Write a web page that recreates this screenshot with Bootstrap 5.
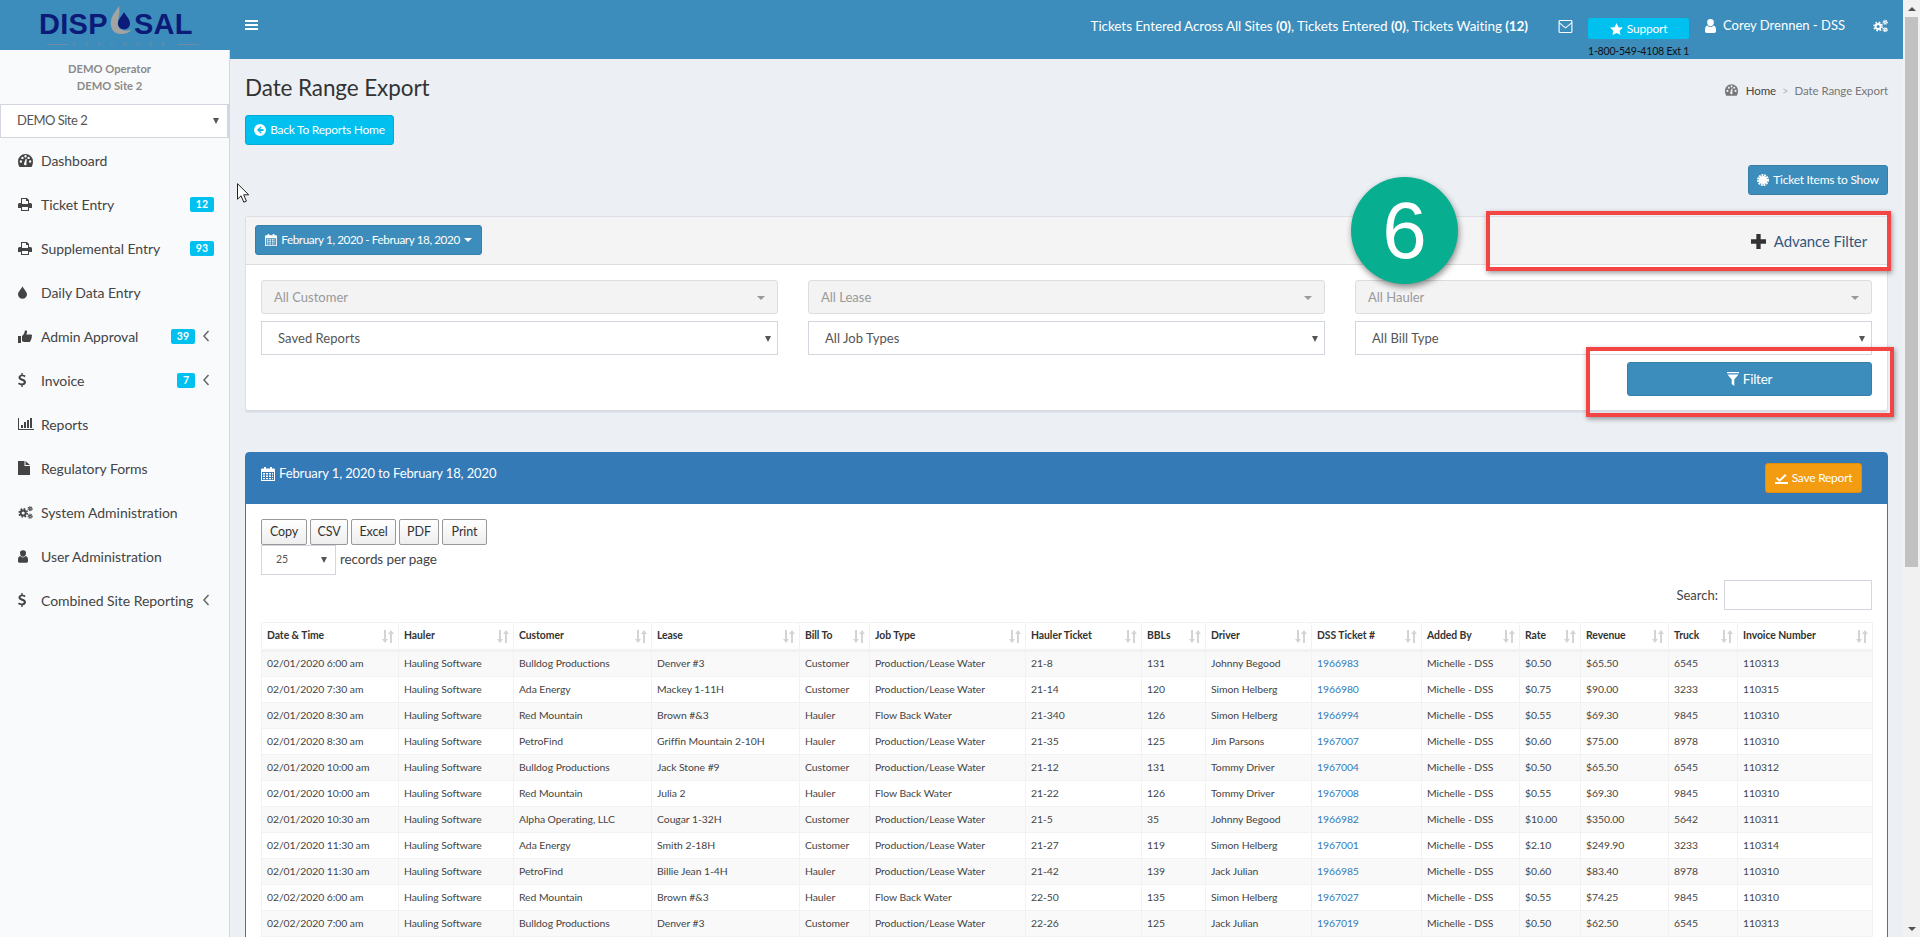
<!DOCTYPE html>
<html lang="en">
<head>
<meta charset="utf-8">
<title>Date Range Export</title>
<link rel="stylesheet" href="https://cdn.jsdelivr.net/npm/bootstrap@5.3.0/dist/css/bootstrap.min.css">
<style>
html,body{height:100%;overflow:hidden}
body{background:#ecf0f5;font-family:"Lato","Open Sans",sans-serif;color:#333;font-size:13px}
.ico{fill:currentColor;flex:none;display:inline-block}
.app-root{height:937px}
.left-col{width:230px;flex:none}
.brand-box{height:50px;background:#3c8dbc;overflow:hidden}
.brand-word{font-family:"Liberation Sans",sans-serif;font-weight:700;font-size:29px;line-height:29px;color:#0c1a78;letter-spacing:.3px}
.brand-row{height:29px;padding:10px 0 0 39px;box-sizing:content-box}
.brand-drop{width:26px;height:34px;margin:-5px 0 0 0;flex:none}
.brand-sub{font-family:"Liberation Sans",sans-serif;font-size:5px;line-height:6px;letter-spacing:9.2px;color:#6f8ea6;white-space:nowrap;margin-top:2px;padding-left:47px;gap:4px}
.brand-line{display:block;width:21px;height:1px;background:#6f8ea6;flex:none}
.side{flex:1;background:#f9fafc;border-right:1px solid #d2d6de;width:230px}
.side-org{height:54px;padding-top:10px;text-align:center;font-weight:700;font-size:11.2px;line-height:17px;color:#8a8a8a;padding-right:10px}
.site-pick{height:34px;width:229px;background:#fff;border:1px solid #d2d6de;border-width:1px 2px 1px 1px;padding:0 8px 0 16px;font-size:13px;color:#555;letter-spacing:-.5px}
.tri-dark{display:block;width:0;height:0;border-left:3.5px solid transparent;border-right:3.5px solid transparent;border-top:6px solid #555;flex:none}
.menu-list{list-style:none;margin:0;padding:0}
.menu-row{height:44px;padding:0 15px 0 18px;color:#444;font-size:14px;margin:0}
.menu-ic{width:23px;flex:none;display:flex;align-items:center}
.menu-txt{flex:1;white-space:nowrap;letter-spacing:-.05px}
.pill-cyan{background:#00c0ef;color:#fff;font-weight:700;font-size:10.5px;line-height:15px;height:15px;border-radius:2px;padding:0 6px}
.chev{width:8px;margin:0 4px 0 7px;color:#666;flex:none}
.main-col{flex:1;min-width:0;position:relative;overflow:hidden}
.top-bar{height:59px;background:#3c8dbc;color:#fff;position:relative}
.burger{position:absolute;left:15px;top:20px;width:13px}
.burger span{display:block;height:2px;background:#fff;margin-bottom:2px}
.top-stats{font-size:13.5px;letter-spacing:-.07px;white-space:nowrap;margin-right:30px;margin-top:-7px}
.top-right{padding-right:15px;height:59px}
.support-wrap{width:101px;margin:0 16px 0 15px;padding-top:18px;align-self:flex-start}
.support-btn{background:#00c0ef;height:21px;border-radius:2px;color:#fff;font-size:12px;line-height:21px;text-align:center;letter-spacing:-.2px}
.support-phone{color:#111;font-size:10.5px;line-height:12px;margin-top:6px;white-space:nowrap;letter-spacing:-.2px}
.user-nm{font-size:13px;margin:0 28px 0 7px;white-space:nowrap}
.top-item{margin-top:-7px}
.page-wrap{padding:0 15px;height:878px;overflow:hidden}
.page-h{padding-top:15px;height:56px}
.page-title{font-size:22.5px;font-weight:400;color:#333;margin:0;line-height:27px;letter-spacing:-.1px}
.crumbs{font-size:11.5px;color:#777;margin-top:8px;letter-spacing:-.1px}
.crumbs b{font-weight:400;color:#444}
.crumbs i{font-style:normal;color:#bbb;margin:0 6px}
.btn-sky{background:#00c0ef;border:1px solid #00acd6;color:#fff;height:30px;width:149px;font-size:12px;border-radius:3px;padding:0;letter-spacing:-.25px}
.btn-blue{background:#3c8dbc;border:1px solid #367fa9;color:#fff;font-size:12px;border-radius:3px;padding:0;letter-spacing:-.25px}
.btn-ticket{height:30px;width:140px}
.ticket-row{margin-top:20px;height:51px}
.filter-box{background:#fff;border:1px solid #dcdfe5;border-bottom:2px solid #d9dde3;border-radius:3px;height:196px;position:relative;box-shadow:0 1px 1px rgba(0,0,0,.05)}
.filter-head{height:48px;background:#f4f4f4;border-bottom:1px solid #ddd;padding:8px 9px 0}
.btn-date{height:30px;width:227px;font-size:11.7px;letter-spacing:-.4px}
.adv-link{font-size:15px;color:#34587f;margin:5px 11px 0 0;letter-spacing:-.12px}
.filter-body{padding:15px 15px 0}
.filter-grid{display:grid;grid-template-columns:517px 517px 517px;column-gap:30px;row-gap:7px}
.pick-off{height:34px;background:#f3f3f3;border:1px solid #ddd;border-radius:3px;padding:1px 12px 0;color:#999;font-size:13px}
.pick-on{height:34px;background:#fff;border:1px solid #d2d6de;padding:1px 6px 0 16px;color:#555;font-size:13px;letter-spacing:.05px}
.caret-grey{width:0;height:0;border-left:4px solid transparent;border-right:4px solid transparent;border-top:4px solid #999}
.filter-action{justify-content:flex-end;margin-top:7px}
.btn-filter{width:245px;height:34px;font-size:13.5px}
.report-box{background:#fff;border:1px solid #337ab7;border-top-left-radius:4px;border-top-right-radius:4px;margin-top:40px;height:520px}
.report-head{background:#337ab7;height:51px;color:#fff;padding:0 25px 0 15px}
.report-title{font-size:13px;padding-top:11px;letter-spacing:-.12px}
.btn-save{background:#f39c12;border:1px solid #e08e0b;color:#fff;font-size:12px;width:97px;height:30px;border-radius:3px;padding:0;margin-top:10px;letter-spacing:-.25px}
.report-body{padding:15px 15px 0}
.tool-row{gap:3px;height:26px}
.btn-export{height:26px;background:linear-gradient(#fff,#eee);border:1px solid #999;color:#333;font-size:12.5px;padding:1px 0 0;border-radius:2px;letter-spacing:-.1px}
.len-row{height:35px}
.len-pick{width:75px;height:30px;border:1px solid #d2d6de;padding:0 8px 0 14px;font-size:10.5px;color:#555}
.len-txt{font-size:13.500px;margin-left:4px;line-height:28px;color:#444;letter-spacing:-.1px}
.search-row{justify-content:flex-end;height:42px;gap:6px;color:#444;font-size:13px;line-height:30px}
.search-box{width:148px;height:30px;border:1px solid #d2d6de;background:#fff}
.data-tbl{table-layout:fixed;width:1611px;border-collapse:collapse;font-size:10.4px;color:#444;letter-spacing:-.05px}
.data-tbl th{height:28px;border:1px solid #f2f2f2;border-bottom:3px solid #f2f2f2;padding:0 0 0 5px;font-weight:700;color:#333;white-space:nowrap;position:relative;font-size:10.4px}
.data-tbl td{height:26px;border:1px solid #f2f2f2;padding:0 0 0 5px;white-space:nowrap;overflow:hidden}
.data-tbl tbody tr:nth-child(odd){background:#f9f9f9}
.data-tbl a{color:#337ab7;text-decoration:none}
.sort-ic{position:absolute;right:4px;top:7px;color:#d4d4d4}
.scroll-rail{width:17px;flex:none;background:#f1f1f1;display:flex;flex-direction:column}
.scroll-btn{height:17px;display:flex;align-items:center;justify-content:center}
.scroll-thumb{height:550px;background:#c1c1c1;margin:0 2px}
.scroll-gap{flex:1}
.tri-up{width:0;height:0;border-left:4px solid transparent;border-right:4px solid transparent;border-bottom:4px solid #505050}
.tri-dn{width:0;height:0;border-left:4px solid transparent;border-right:4px solid transparent;border-top:4px solid #505050}
.note-oval{position:absolute;left:1121px;top:177px;width:107px;height:107px;border-radius:50%;background:#07ae8f;box-shadow:1px 3px 6px rgba(0,0,0,.45);color:#fff;font-family:"Liberation Sans",sans-serif;font-size:80px;line-height:107px;text-align:center;z-index:5}
.note-rect{position:absolute;border:4px solid #f44545;box-shadow:1px 2px 5px rgba(0,0,0,.4);z-index:6}
.rect-a{left:1256px;top:211px;width:405px;height:60px}
.rect-b{left:1356px;top:347px;width:308px;height:70px}
.mouse-ptr{position:absolute;left:7px;top:183px;z-index:7}
</style>
</head>
<body>
<svg width="0" height="0" style="position:absolute">
<defs>
<symbol id="i-gauge" viewBox="0 0 16 14"><path fill-rule="evenodd" d="M8 0a8 8 0 0 0-8 8.500c0 2 .6 3.900 1.600 5.500h12.800c1-1.600 1.600-3.500 1.600-5.500A8 8 0 0 0 8 0zM3 9.400a1.300 1.300 0 1 1 0-2.600 1.300 1.300 0 0 1 0 2.600zM4.700 5.500a1.300 1.300 0 1 1 0-2.600 1.300 1.300 0 0 1 0 2.600zM8 3.800a1.300 1.300 0 1 1 0-2.600 1.300 1.300 0 0 1 0 2.600zM9 11.800a1.600 1.600 0 0 1-2.600-1.600l1.800-5.200 1.100.3-.3 5.500c.2.200.2.500 0 1zM11.300 5.500a1.300 1.300 0 1 1 0-2.600 1.300 1.300 0 0 1 0 2.600zM13 9.400a1.300 1.300 0 1 1 0-2.600 1.300 1.300 0 0 1 0 2.600z"/></symbol>
<symbol id="i-print" viewBox="0 0 14 13"><path fill-rule="evenodd" d="M3 0h6l2 2v3h1.500A1.500 1.500 0 0 1 14 6.500V10h-3v3H3v-3H0V6.500A1.500 1.500 0 0 1 1.500 5H3zm1 1v5h6V3H8V1zm0 8v3h6V9z"/></symbol>
<symbol id="i-drop" viewBox="0 0 10 14"><path d="M5 0c.6 2.400 5 6 5 9a5 5 0 0 1-10 0C0 6 4.400 2.400 5 0z"/></symbol>
<symbol id="i-thumb" viewBox="0 0 14 13"><path d="M0 6h3v7H0zM4 6c1.500-1 2.500-3 2.800-5 .1-1 1.800-1.200 2.200.2.300 1.200-.2 2.400-.7 3.300H13c1.300 0 1.300 1.800.5 2.200.6.600.4 1.700-.3 2 .2.800-.1 1.500-.7 1.800.1 1-.5 1.500-1.500 1.500H7c-1.200 0-2-.5-3-.8z"/></symbol>
<symbol id="i-dollar" viewBox="0 0 8 14"><path fill-rule="evenodd" d="M3.300 0h1.400v1.700c1.200.1 2.200.500 2.900 1L6.700 4.200c-.7-.5-1.500-.9-2.500-.9-1 0-1.600.4-1.600 1 0 .7.700 1 2 1.500C6.500 6.500 8 7.200 8 9.200c0 1.600-1.300 2.700-3.300 3V14H3.300v-1.800C2 12.100.9 11.600 0 11l.9-1.500c.9.600 1.900 1 3 1 1.100 0 1.900-.5 1.900-1.200 0-.8-.8-1.100-2.100-1.600C2 7.100.5 6.400.5 4.600.5 3 1.600 2 3.300 1.700z"/></symbol>
<symbol id="i-bars" viewBox="0 0 16 12"><path d="M0 0h1v11h15v1H0zM3 7h2v3H3zM6 4h2v6H6zM9 2h2v8H9zM12 0h2v10h-2z"/></symbol>
<symbol id="i-file" viewBox="0 0 12 14"><path d="M0 0h6.500v5H12v9H0zM7.500 0 12 4H7.500z"/></symbol>
<symbol id="i-cogs" viewBox="0 0 16 14"><g fill="none" stroke="currentColor"><circle cx="5.500" cy="7.500" r="2.700" stroke-width="2"/><circle cx="5.500" cy="7.500" r="4.400" stroke-width="1.700" stroke-dasharray="1.800 1.660"/><circle cx="13" cy="3" r="1.200" stroke-width="1.200"/><circle cx="13" cy="3" r="2.200" stroke-width="1.200" stroke-dasharray="1 .73"/><circle cx="13" cy="11" r="1.200" stroke-width="1.200"/><circle cx="13" cy="11" r="2.200" stroke-width="1.200" stroke-dasharray="1 .73"/></g></symbol>
<symbol id="i-user" viewBox="0 0 11 14"><path d="M5.500 0a3.300 3.300 0 0 1 3.300 3.500c0 2-1.300 3.800-3.300 3.800S2.200 5.500 2.200 3.500A3.300 3.300 0 0 1 5.500 0zM2.500 6.500c.8 1 1.800 1.500 3 1.500s2.200-.5 3-1.500c1.500.3 2.500 1.600 2.500 4v1.800c0 1-.8 1.700-1.700 1.700H1.700C.8 14 0 13.300 0 12.300V10.500c0-2.400 1-3.700 2.500-4z"/></symbol>
<symbol id="i-angle" viewBox="0 0 8 12"><path d="M6.500 1 2 6l4.500 5" fill="none" stroke="currentColor" stroke-width="1.500"/></symbol>
<symbol id="i-mail" viewBox="0 0 15 14"><path fill-rule="evenodd" d="M1.500 0h12A1.500 1.500 0 0 1 15 1.500v11a1.500 1.500 0 0 1-1.500 1.500h-12A1.500 1.500 0 0 1 0 12.500v-11A1.500 1.500 0 0 1 1.500 0zm0 1.200a.3.300 0 0 0-.3.300v1.100l6.300 5.100 6.300-5.100V1.500a.3.300 0 0 0-.3-.3zM1.200 4.100v8.400c0 .2.100.3.300.3h12c.2 0 .3-.1.300-.3V4.100L7.500 9.200z"/></symbol>
<symbol id="i-star" viewBox="0 0 14 13"><path d="M7 0l2.100 4.500 4.900.5-3.600 3.300 1 4.700L7 10.700 2.600 13l1-4.700L0 5l4.900-.5z"/></symbol>
<symbol id="i-cal" viewBox="0 0 14 14"><path fill-rule="evenodd" d="M3 0h2v1.500h4V0h2v1.500h1.700c.7 0 1.300.6 1.300 1.300V14H0V2.800c0-.7.600-1.300 1.300-1.300H3zM1 5v8h12V5zm1 1h2v1.500H2zm3 0h2v1.500H5zm3 0h2v1.500H8zm3 0h1v1.500h-1zM2 8.500h2V10H2zm3 0h2V10H5zm3 0h2V10H8zm3 0h1V10h-1zM2 11h2v1.200H2zm3 0h2v1.200H5zm3 0h2v1.200H8zm3 0h1v1.200h-1z"/></symbol>
<symbol id="i-cert" viewBox="0 0 14 14"><circle cx="7" cy="7" r="4.800"/><circle cx="7" cy="7" r="5.800" fill="none" stroke="currentColor" stroke-width="2.400" stroke-dasharray="2.100 1"/></symbol>
<symbol id="i-filter" viewBox="0 0 12 14"><path d="M0 0h12v1.200H0zM.5 2.500h11L7.300 7.500V14l-2.600-2V7.500z"/></symbol>
<symbol id="i-plus" viewBox="0 0 14 14"><path d="M5 0h4v5h5v4H9v5H5V9H0V5h5z"/></symbol>
<symbol id="i-back" viewBox="0 0 12 12"><path fill-rule="evenodd" d="M6 0a6 6 0 1 1 0 12A6 6 0 0 1 6 0zm.6 2.400L3 6l3.600 3.600 1-1L6 7h3.500V5H6l1.600-1.600z"/></symbol>
<symbol id="i-sort" viewBox="0 0 12 13"><path d="M2 0h2v9h2l-3 4-3-4h2zM8 13h2V4h2L9 0 6 4h2z"/></symbol>
</defs>
</svg>

<div class="d-flex app-root overflow-hidden">
  <div class="left-col d-flex flex-column">
    <div class="brand-box">
      <div class="d-flex align-items-start brand-row">
        <span class="brand-word">DISP</span>
        <svg class="brand-drop" viewBox="0 0 26 34"><path d="M11 1C9 5 4 9 3 16c-1 8 3 13 10 13 5 0 9-2 11-5-3 2-6 2-9 1-4-1-6-4-5-9 1-5 2-9 1-15z" fill="#a3a3a3"/><path d="M16 7c2 4 6 7 6 11.500a6 6 0 0 1-12 0C10 14 14 11 16 7z" fill="#0c1a78"/></svg>
        <span class="brand-word">SAL</span>
      </div>
      <div class="brand-sub d-flex align-items-center"><span class="brand-line"></span><span>SOFTWARE</span><span class="brand-line"></span></div>
    </div>
    <div class="side">
      <div class="side-org">DEMO Operator<br>DEMO Site 2</div>
      <div class="site-pick d-flex align-items-center justify-content-between"><span>DEMO Site 2</span><span class="tri-dark"></span></div>
      <ul class="menu-list">
        <li class="menu-row d-flex align-items-center"><span class="menu-ic"><svg class="ico" width="15" height="13"><use href="#i-gauge"/></svg></span><span class="menu-txt">Dashboard</span></li>
        <li class="menu-row d-flex align-items-center"><span class="menu-ic"><svg class="ico" width="14" height="13"><use href="#i-print"/></svg></span><span class="menu-txt">Ticket Entry</span><span class="pill-cyan">12</span></li>
        <li class="menu-row d-flex align-items-center"><span class="menu-ic"><svg class="ico" width="14" height="13"><use href="#i-print"/></svg></span><span class="menu-txt">Supplemental Entry</span><span class="pill-cyan">93</span></li>
        <li class="menu-row d-flex align-items-center"><span class="menu-ic"><svg class="ico" width="9" height="13"><use href="#i-drop"/></svg></span><span class="menu-txt">Daily Data Entry</span></li>
        <li class="menu-row d-flex align-items-center"><span class="menu-ic"><svg class="ico" width="14" height="13"><use href="#i-thumb"/></svg></span><span class="menu-txt">Admin Approval</span><span class="pill-cyan">39</span><svg class="ico chev" height="12"><use href="#i-angle"/></svg></li>
        <li class="menu-row d-flex align-items-center"><span class="menu-ic"><svg class="ico" width="8" height="14"><use href="#i-dollar"/></svg></span><span class="menu-txt">Invoice</span><span class="pill-cyan">7</span><svg class="ico chev" height="12"><use href="#i-angle"/></svg></li>
        <li class="menu-row d-flex align-items-center"><span class="menu-ic"><svg class="ico" width="16" height="12"><use href="#i-bars"/></svg></span><span class="menu-txt">Reports</span></li>
        <li class="menu-row d-flex align-items-center"><span class="menu-ic"><svg class="ico" width="12" height="14"><use href="#i-file"/></svg></span><span class="menu-txt">Regulatory Forms</span></li>
        <li class="menu-row d-flex align-items-center"><span class="menu-ic"><svg class="ico" width="15" height="13"><use href="#i-cogs"/></svg></span><span class="menu-txt">System Administration</span></li>
        <li class="menu-row d-flex align-items-center"><span class="menu-ic"><svg class="ico" width="10" height="13"><use href="#i-user"/></svg></span><span class="menu-txt">User Administration</span></li>
        <li class="menu-row d-flex align-items-center"><span class="menu-ic"><svg class="ico" width="8" height="14"><use href="#i-dollar"/></svg></span><span class="menu-txt">Combined Site Reporting</span><svg class="ico chev" height="12"><use href="#i-angle"/></svg></li>
      </ul>
    </div>
  </div>

  <div class="main-col">
    <div class="top-bar d-flex align-items-center justify-content-end top-right">
      <div class="burger"><span></span><span></span><span></span></div>
      <div class="top-stats">Tickets Entered Across All Sites <b>(0)</b>, Tickets Entered <b>(0)</b>, Tickets Waiting <b>(12)</b></div>
      <svg class="ico top-item" width="15" height="13"><use href="#i-mail"/></svg>
      <div class="support-wrap">
        <div class="support-btn d-flex align-items-center justify-content-center gap-1"><svg class="ico" width="13" height="12"><use href="#i-star"/></svg>Support</div>
        <div class="support-phone">1-800-549-4108 Ext 1</div>
      </div>
      <svg class="ico top-item" width="11" height="14"><use href="#i-user"/></svg>
      <div class="user-nm top-item">Corey Drennen - DSS</div>
      <svg class="ico top-item" width="15" height="14"><use href="#i-cogs"/></svg>
    </div>

    <div class="page-wrap">
      <div class="page-h d-flex justify-content-between">
        <h1 class="page-title">Date Range Export</h1>
        <div class="crumbs d-flex align-items-start"><svg class="ico me-2" width="13" height="12" style="margin-top:2px"><use href="#i-gauge"/></svg><b>Home</b><i>&gt;</i><span>Date Range Export</span></div>
      </div>
      <button class="btn btn-sky d-flex align-items-center justify-content-center gap-1"><svg class="ico" width="12" height="12"><use href="#i-back"/></svg>Back To Reports Home</button>
      <div class="ticket-row d-flex justify-content-end">
        <button class="btn btn-blue btn-ticket d-flex align-items-center justify-content-center gap-1"><svg class="ico" width="12" height="12"><use href="#i-cert"/></svg>Ticket Items to Show</button>
      </div>
      <div class="filter-box">
        <div class="filter-head d-flex justify-content-between align-items-start">
          <button class="btn btn-blue btn-date d-flex align-items-center justify-content-center gap-1"><svg class="ico" width="12" height="12"><use href="#i-cal"/></svg>February 1, 2020 - February 18, 2020<span class="caret-grey" style="border-top-color:#fff"></span></button>
          <div class="adv-link d-flex align-items-center gap-2"><svg class="ico" width="15" height="15" style="color:#333"><use href="#i-plus"/></svg>Advance Filter</div>
        </div>
        <div class="filter-body">
          <div class="filter-grid">
            <div class="pick-off d-flex align-items-center justify-content-between"><span>All Customer</span><span class="caret-grey"></span></div>
            <div class="pick-off d-flex align-items-center justify-content-between"><span>All Lease</span><span class="caret-grey"></span></div>
            <div class="pick-off d-flex align-items-center justify-content-between"><span>All Hauler</span><span class="caret-grey"></span></div>
            <div class="pick-on d-flex align-items-center justify-content-between"><span>Saved Reports</span><span class="tri-dark"></span></div>
            <div class="pick-on d-flex align-items-center justify-content-between"><span>All Job Types</span><span class="tri-dark"></span></div>
            <div class="pick-on d-flex align-items-center justify-content-between"><span>All Bill Type</span><span class="tri-dark"></span></div>
          </div>
          <div class="filter-action d-flex">
            <button class="btn btn-blue btn-filter d-flex align-items-center justify-content-center gap-1"><svg class="ico" width="12" height="14"><use href="#i-filter"/></svg>Filter</button>
          </div>
        </div>
      </div>

      <div class="report-box">
        <div class="report-head d-flex justify-content-between align-items-start">
          <div class="report-title d-flex align-items-center gap-1"><svg class="ico" width="14" height="14"><use href="#i-cal"/></svg>February 1, 2020 to February 18, 2020</div>
          <button class="btn btn-save d-flex align-items-center justify-content-center gap-1"><svg class="ico" width="13" height="11" viewBox="0 0 13 11"><path d="M0 9h13v2H0zM2 4l2.500 2.500L10 1l1.500 1.500L4.500 9 1 5.500z"/></svg>Save Report</button>
        </div>
        <div class="report-body">
          <div class="d-flex tool-row">
            <button class="btn btn-export" style="width:46px">Copy</button>
            <button class="btn btn-export" style="width:38px">CSV</button>
            <button class="btn btn-export" style="width:45px">Excel</button>
            <button class="btn btn-export" style="width:40px">PDF</button>
            <button class="btn btn-export" style="width:45px">Print</button>
          </div>
          <div class="d-flex len-row align-items-start">
            <div class="len-pick d-flex align-items-center justify-content-between"><span>25</span><span class="tri-dark"></span></div>
            <div class="len-txt">records per page</div>
          </div>
          <div class="d-flex search-row align-items-start"><span>Search:</span><div class="search-box"></div></div>
          <table class="data-tbl">
            <colgroup><col style="width:137px"><col style="width:115px"><col style="width:138px"><col style="width:148px"><col style="width:70px"><col style="width:156px"><col style="width:116px"><col style="width:64px"><col style="width:106px"><col style="width:110px"><col style="width:98px"><col style="width:61px"><col style="width:88px"><col style="width:69px"><col style="width:135px"></colgroup>
            <thead><tr>
              <th>Date &amp; Time<svg class="ico sort-ic" width="12" height="13"><use href="#i-sort"/></svg></th>
              <th>Hauler<svg class="ico sort-ic" width="12" height="13"><use href="#i-sort"/></svg></th>
              <th>Customer<svg class="ico sort-ic" width="12" height="13"><use href="#i-sort"/></svg></th>
              <th>Lease<svg class="ico sort-ic" width="12" height="13"><use href="#i-sort"/></svg></th>
              <th>Bill To<svg class="ico sort-ic" width="12" height="13"><use href="#i-sort"/></svg></th>
              <th>Job Type<svg class="ico sort-ic" width="12" height="13"><use href="#i-sort"/></svg></th>
              <th>Hauler Ticket<svg class="ico sort-ic" width="12" height="13"><use href="#i-sort"/></svg></th>
              <th>BBLs<svg class="ico sort-ic" width="12" height="13"><use href="#i-sort"/></svg></th>
              <th>Driver<svg class="ico sort-ic" width="12" height="13"><use href="#i-sort"/></svg></th>
              <th>DSS Ticket #<svg class="ico sort-ic" width="12" height="13"><use href="#i-sort"/></svg></th>
              <th>Added By<svg class="ico sort-ic" width="12" height="13"><use href="#i-sort"/></svg></th>
              <th>Rate<svg class="ico sort-ic" width="12" height="13"><use href="#i-sort"/></svg></th>
              <th>Revenue<svg class="ico sort-ic" width="12" height="13"><use href="#i-sort"/></svg></th>
              <th>Truck<svg class="ico sort-ic" width="12" height="13"><use href="#i-sort"/></svg></th>
              <th>Invoice Number<svg class="ico sort-ic" width="12" height="13"><use href="#i-sort"/></svg></th>
            </tr></thead>
            <tbody>
              <tr><td>02/01/2020 6:00 am</td><td>Hauling Software</td><td>Bulldog Productions</td><td>Denver #3</td><td>Customer</td><td>Production/Lease Water</td><td>21-8</td><td>131</td><td>Johnny Begood</td><td><a href="#">1966983</a></td><td>Michelle - DSS</td><td>$0.50</td><td>$65.50</td><td>6545</td><td>110313</td></tr>
              <tr><td>02/01/2020 7:30 am</td><td>Hauling Software</td><td>Ada Energy</td><td>Mackey 1-11H</td><td>Customer</td><td>Production/Lease Water</td><td>21-14</td><td>120</td><td>Simon Helberg</td><td><a href="#">1966980</a></td><td>Michelle - DSS</td><td>$0.75</td><td>$90.00</td><td>3233</td><td>110315</td></tr>
              <tr><td>02/01/2020 8:30 am</td><td>Hauling Software</td><td>Red Mountain</td><td>Brown #&amp;3</td><td>Hauler</td><td>Flow Back Water</td><td>21-340</td><td>126</td><td>Simon Helberg</td><td><a href="#">1966994</a></td><td>Michelle - DSS</td><td>$0.55</td><td>$69.30</td><td>9845</td><td>110310</td></tr>
              <tr><td>02/01/2020 8:30 am</td><td>Hauling Software</td><td>PetroFind</td><td>Griffin Mountain 2-10H</td><td>Hauler</td><td>Production/Lease Water</td><td>21-35</td><td>125</td><td>Jim Parsons</td><td><a href="#">1967007</a></td><td>Michelle - DSS</td><td>$0.60</td><td>$75.00</td><td>8978</td><td>110310</td></tr>
              <tr><td>02/01/2020 10:00 am</td><td>Hauling Software</td><td>Bulldog Productions</td><td>Jack Stone #9</td><td>Customer</td><td>Production/Lease Water</td><td>21-12</td><td>131</td><td>Tommy Driver</td><td><a href="#">1967004</a></td><td>Michelle - DSS</td><td>$0.50</td><td>$65.50</td><td>6545</td><td>110312</td></tr>
              <tr><td>02/01/2020 10:00 am</td><td>Hauling Software</td><td>Red Mountain</td><td>Julia 2</td><td>Hauler</td><td>Flow Back Water</td><td>21-22</td><td>126</td><td>Tommy Driver</td><td><a href="#">1967008</a></td><td>Michelle - DSS</td><td>$0.55</td><td>$69.30</td><td>9845</td><td>110310</td></tr>
              <tr><td>02/01/2020 10:30 am</td><td>Hauling Software</td><td>Alpha Operating, LLC</td><td>Cougar 1-32H</td><td>Customer</td><td>Production/Lease Water</td><td>21-5</td><td>35</td><td>Johnny Begood</td><td><a href="#">1966982</a></td><td>Michelle - DSS</td><td>$10.00</td><td>$350.00</td><td>5642</td><td>110311</td></tr>
              <tr><td>02/01/2020 11:30 am</td><td>Hauling Software</td><td>Ada Energy</td><td>Smith 2-18H</td><td>Customer</td><td>Production/Lease Water</td><td>21-27</td><td>119</td><td>Simon Helberg</td><td><a href="#">1967001</a></td><td>Michelle - DSS</td><td>$2.10</td><td>$249.90</td><td>3233</td><td>110314</td></tr>
              <tr><td>02/01/2020 11:30 am</td><td>Hauling Software</td><td>PetroFind</td><td>Billie Jean 1-4H</td><td>Hauler</td><td>Production/Lease Water</td><td>21-42</td><td>139</td><td>Jack Julian</td><td><a href="#">1966985</a></td><td>Michelle - DSS</td><td>$0.60</td><td>$83.40</td><td>8978</td><td>110310</td></tr>
              <tr><td>02/02/2020 6:00 am</td><td>Hauling Software</td><td>Red Mountain</td><td>Brown #&amp;3</td><td>Hauler</td><td>Flow Back Water</td><td>22-50</td><td>135</td><td>Simon Helberg</td><td><a href="#">1967027</a></td><td>Michelle - DSS</td><td>$0.55</td><td>$74.25</td><td>9845</td><td>110310</td></tr>
              <tr><td>02/02/2020 7:00 am</td><td>Hauling Software</td><td>Bulldog Productions</td><td>Denver #3</td><td>Customer</td><td>Production/Lease Water</td><td>22-26</td><td>125</td><td>Jack Julian</td><td><a href="#">1967019</a></td><td>Michelle - DSS</td><td>$0.50</td><td>$62.50</td><td>6545</td><td>110313</td></tr>
            </tbody>
          </table>
        </div>
      </div>
    </div>

    <svg class="mouse-ptr" width="13" height="20" viewBox="0 0 13 20"><path d="M.5.700v15.500l3.600-3.400 2.700 6.400 2.600-1.100-2.700-6.300h5z" fill="#fff" stroke="#222" stroke-width="1"/></svg>
    <div class="note-oval">6</div>
    <div class="note-rect rect-a"></div>
    <div class="note-rect rect-b"></div>
  </div>

  <div class="scroll-rail">
    <div class="scroll-btn"><span class="tri-up"></span></div>
    <div class="scroll-thumb"></div>
    <div class="scroll-gap"></div>
    <div class="scroll-btn"><span class="tri-dn"></span></div>
  </div>
</div>
<script src="https://cdn.jsdelivr.net/npm/bootstrap@5.3.0/dist/js/bootstrap.bundle.min.js"></script>
</body>
</html>
